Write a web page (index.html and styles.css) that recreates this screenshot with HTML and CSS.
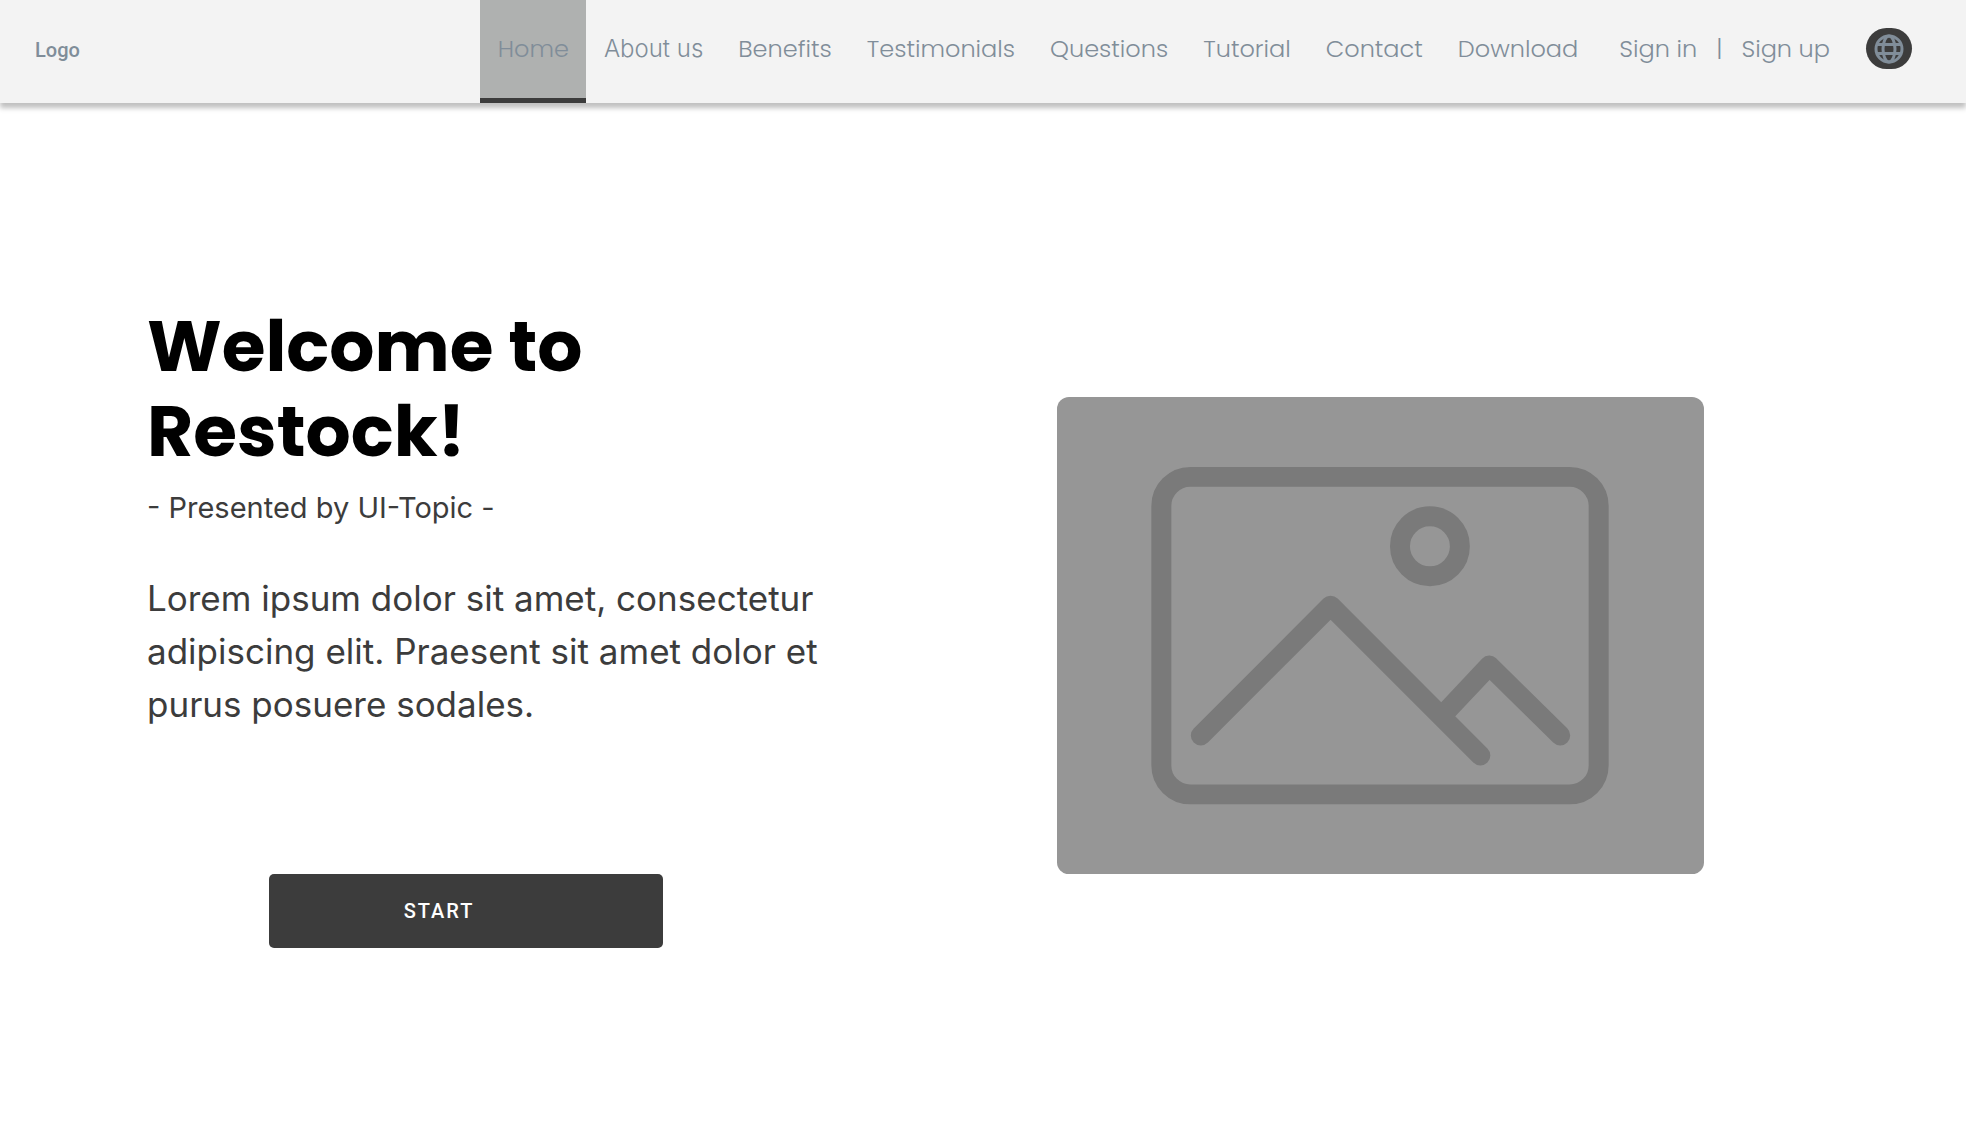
FILE: index.html
```html
<!DOCTYPE html>
<html lang="en">
<head>
<meta charset="utf-8">
<meta name="viewport" content="width=device-width, initial-scale=1">
<title>Restock</title>
<link rel="stylesheet" href="styles.css">
</head>
<body>
<header class="site-header">
  <a class="logo" href="#">Logo</a>
  <nav class="main-nav" aria-label="Main">
    <a class="nav-link nav-link-active" href="#" aria-current="page">Home</a>
    <a class="nav-link nav-link-about" href="#">About us</a>
    <a class="nav-link" href="#">Benefits</a>
    <a class="nav-link" href="#">Testimonials</a>
    <a class="nav-link" href="#">Questions</a>
    <a class="nav-link" href="#">Tutorial</a>
    <a class="nav-link" href="#">Contact</a>
    <a class="nav-link" href="#">Download</a>
  </nav>
  <div class="account">
    <a class="account-link" href="#">Sign in</a>
    <span class="divider">|</span>
    <a class="account-link" href="#">Sign up</a>
  </div>
  <button class="language" type="button" aria-label="Change language">
    <svg class="globe" viewBox="0 0 30 30" aria-hidden="true">
      <circle cx="15" cy="15" r="13"/>
      <ellipse cx="15" cy="15" rx="6" ry="13"/>
      <path d="M3 10.500H27M3 19.500H27"/>
    </svg>
  </button>
</header>
<main class="hero">
  <section class="intro">
    <h1 class="title">Welcome to<br>Restock!</h1>
    <p class="subtitle">- Presented by UI-Topic -</p>
    <p class="lead">Lorem ipsum dolor sit amet, consectetur adipiscing elit. Praesent sit amet dolor et purus posuere sodales.</p>
    <button class="start" type="button">START</button>
  </section>
  <div class="media">
    <svg class="placeholder" viewBox="0 0 648 478" role="img" aria-label="Image placeholder">
      <rect class="placeholder-back" width="648" height="478" rx="12"/>
      <g class="placeholder-lines">
        <rect x="104.500" y="80" width="438" height="318" rx="29"/>
        <circle cx="373.500" cy="149.500" r="30"/>
        <path d="M144 339L274 209L424 359M386 319L433 269L504 339"/>
      </g>
    </svg>
  </div>
</main>
</body>
</html>
```
FILE: styles.css
```css
* {
  box-sizing: border-box;
}

body {
  margin: 0;
  background: #fff;
  color: #3c3c3c;
  font-family: Inter, sans-serif;
}

.site-header {
  display: flex;
  align-items: center;
  height: 103px;
  padding: 0 54px 0 35px;
  background: #f3f3f3;
  box-shadow: 0 5px 5px rgba(0, 0, 0, 0.25);
  color: #808d99;
  font-family: Poppins, Inter, sans-serif;
  font-size: 24px;
  font-weight: 300;
}

.logo {
  margin: 0 auto 4px 0;
  color: inherit;
  font-family: Roboto, sans-serif;
  font-size: 20px;
  font-weight: 500;
  text-decoration: none;
}

.main-nav {
  display: flex;
  align-self: stretch;
}

.nav-link {
  display: flex;
  align-items: center;
  padding: 0 17px 2px 18px;
  border-bottom: 5px solid transparent;
  color: inherit;
  text-decoration: none;
}

.nav-link-active {
  border-bottom-color: #3c3c3c;
  background: #afb1b0;
}

.nav-link-about {
  font-family: Inter, sans-serif;
}

.account {
  display: flex;
  gap: 19px;
  margin: 0 36px 7px 24px;
}

.account-link {
  color: inherit;
  text-decoration: none;
}

.language {
  display: flex;
  align-items: center;
  justify-content: center;
  width: 46px;
  height: 41px;
  margin-bottom: 6px;
  padding: 0;
  border: 0;
  border-radius: 21px;
  background: #3c3c3c;
}

.globe {
  width: 30px;
  height: 30px;
  fill: none;
  stroke: #808d99;
  stroke-width: 3;
}

.hero {
  display: grid;
  grid-template-columns: 910fr 647fr;
  padding: 201px 262px 60px 147px;
}

.title {
  margin: 0;
  color: #000;
  font-family: Poppins, Inter, sans-serif;
  font-size: 71px;
  font-weight: 700;
  line-height: 85px;
}

.subtitle {
  margin: 12px 0 0;
  font-size: 29px;
  line-height: 44px;
}

.lead {
  max-width: 700px;
  margin: 42px 0 0;
  font-size: 35px;
  line-height: 53px;
}

.start {
  width: 394px;
  height: 74px;
  margin: 143px 0 0 122px;
  padding: 0 54px 0 0;
  border: 0;
  border-radius: 5px;
  background: #3c3c3c;
  color: #fff;
  font-family: Roboto, sans-serif;
  font-size: 20px;
  font-weight: 500;
  letter-spacing: 2px;
}

.media {
  margin-top: 93px;
}

.placeholder {
  display: block;
  width: 100%;
}

.placeholder-back {
  fill: #969696;
}

.placeholder-lines {
  fill: none;
  stroke: #7a7a7a;
  stroke-width: 20;
  stroke-linecap: round;
  stroke-linejoin: round;
}
```
